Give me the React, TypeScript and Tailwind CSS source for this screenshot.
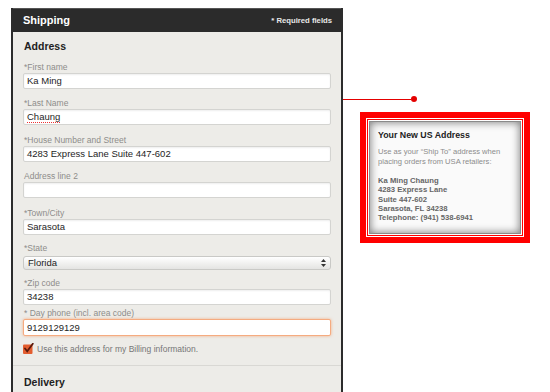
const FONT = { fontFamily: '"Liberation Sans", Arial, Helvetica, sans-serif' };

type FieldProps = {
  label: string;
  value?: string;
  gap: number;
  spell?: boolean;
};

const GAPS: Record<number, string> = {
  8: 'mb-[8px]',
  9: 'mb-[9px]',
  10: 'mb-[10px]',
  3: 'mb-[3px]',
};

function Field({ label, value = '', gap, spell }: FieldProps) {
  return (
    <div className={GAPS[gap]}>
      <div className="pl-px text-[8.5px] leading-[10px] text-[#8d8d8b]">{label}</div>
      <div className="mt-px h-[16px] rounded-[2px] border border-[#d4d4d1] bg-white pl-[3px] text-[9.5px] leading-[14px] text-[#1e1e1e] shadow-[inset_0_1px_2px_rgba(0,0,0,0.07)]">
        <span className={spell ? 'underline decoration-dotted decoration-[#e33] underline-offset-2' : ''}>{value}</span>
      </div>
    </div>
  );
}

function SelectArrows() {
  return (
    <svg width="7" height="10" viewBox="0 0 7 10">
      <path d="M3.5 1 L6 4 L1 4 Z" fill="#333" />
      <path d="M3.5 9 L6 6 L1 6 Z" fill="#333" />
    </svg>
  );
}

function CheckIcon() {
  return (
    <svg width="11" height="11" viewBox="0 0 11 11">
      <rect x="0" y="1.5" width="9.5" height="9.5" rx="1" fill="#e35d2f" />
      <path d="M2 5.5 L4.2 8.2 L9.8 0.8" fill="none" stroke="#5a1a0c" strokeWidth="1.8" strokeLinecap="round" />
    </svg>
  );
}

export default function App() {
  return (
    <div className="flex h-[392px] items-start overflow-hidden bg-white pl-[11px] pt-[8px]" style={FONT}>
      {/* shipping panel */}
      <div className="h-[400px] w-[332px] shrink-0 border-x-2 border-[#2c2c2c] bg-[#edece8]">
        <div className="flex h-[24px] items-center justify-between border-t border-[#555] bg-[#2b2b2b] pl-[10px] pr-[9px]">
          <span className="text-[11px] font-bold text-white">Shipping</span>
          <span className="text-[7.7px] font-bold text-[#e8e8e8]">* Required fields</span>
        </div>

        <div className="border-b border-[#d9d8d4] px-[10px] pb-[11px] pt-[8px]">
          <div className="pl-px text-[10.5px] font-bold leading-[13px] text-[#222]">Address</div>
          <div className="mt-[9px]">
            <Field label="*First name" value="Ka Ming" gap={9} />
            <Field label="*Last Name" value="Chaung" gap={10} spell />
            <Field label="*House Number and Street" value="4283 Express Lane Suite 447-602" gap={9} />
            <Field label="Address line 2" gap={10} />
            <Field label="*Town/City" value="Sarasota" gap={8} />

            <div className="mb-[8px]">
              <div className="pl-px text-[8.5px] leading-[10px] text-[#8d8d8b]">*State</div>
              <div className="mt-[3px] flex h-[14px] items-center justify-between rounded-[3px] border border-[#c9c9c6] bg-gradient-to-b from-white to-[#e4e4e2] pl-[4px] pr-[3px] text-[9.5px] text-[#222]">
                <span>Florida</span>
                <SelectArrows />
              </div>
            </div>

            <Field label="*Zip code" value="34238" gap={3} />

            <div>
              <div className="pl-px text-[8.5px] leading-[10px] text-[#8d8d8b]">* Day phone (incl. area code)</div>
              <div className="mt-px h-[17px] rounded-[2px] border border-[#f5ab80] bg-white pl-[3px] text-[9.5px] leading-[15px] text-[#1e1e1e] shadow-[0_0_3px_rgba(245,150,90,0.7)]">
                9129129129
              </div>
            </div>

            <div className="mt-[7px] flex items-center gap-[3px]">
              <CheckIcon />
              <span className="text-[8.5px] leading-[10px] text-[#777]">Use this address for my Billing information.</span>
            </div>
          </div>
        </div>

        <div className="px-[10px] pt-[10px]">
          <div className="pl-px text-[10.5px] font-bold leading-[13px] text-[#222]">Delivery</div>
        </div>
      </div>

      {/* callout */}
      <div className="flex flex-col">
        <div className="mt-[88px] flex h-[6px] items-center">
          <div className="h-px w-[68px] bg-[#e40000]" />
          <div className="h-[6px] w-[6px] rounded-full bg-[#e40000]" />
        </div>
        <div className="ml-[17px] mt-[10px] h-[131px] w-[170px] border-[6px] border-[#ff0000] bg-white p-px">
          <div className="h-full border border-[#ff0000] bg-white p-px">
            <div className="h-full border border-[#8a8a8a] bg-[#fafafa] pl-[8px] pt-[7px] shadow-[inset_0_0_8px_rgba(0,0,0,0.55)]">
              <div className="text-[8.8px] font-bold leading-[12px] text-[#222]">Your New US Address</div>
              <div className="mt-[6px] text-[7.6px] leading-[9.5px] text-[#8c8c8c]">
                <div>Use as your “Ship To” address when</div>
                <div>placing orders from USA retailers:</div>
              </div>
              <div className="mt-[10px] text-[7.7px] font-bold leading-[9.3px] text-[#666]">
                <div>Ka Ming Chaung</div>
                <div>4283 Express Lane</div>
                <div>Suite 447-602</div>
                <div>Sarasota, FL 34238</div>
                <div>Telephone: (941) 538-6941</div>
              </div>
            </div>
          </div>
        </div>
      </div>
    </div>
  );
}
